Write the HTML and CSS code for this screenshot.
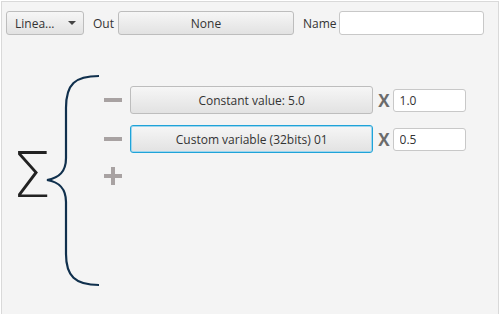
FILE: index.html
```html
<!DOCTYPE html>
<html lang="en">
<head>
    <meta charset="UTF-8">
    <title>Linear combination</title>
    <link rel="stylesheet" href="styles.css">
</head>
<body>
    <div class="panel">
        <div class="toolbar">
            <button class="btn combo">Linea...<span class="arrow"></span></button>
            <span class="label">Out</span>
            <button class="btn out-btn">None</button>
            <span class="label name-label">Name</span>
            <input type="text" class="field name-field">
        </div>

        <div class="sum">
            <span class="sigma">Σ</span>
            <svg class="brace" width="56" height="214" viewBox="0 0 56 214">
                <path d="M54 2 C30 2 21 10 21 34 L21 84 C21 98 14 104 2 106 C14 108 21 114 21 128 L21 180 C21 202 30 211 54 211"
                      fill="none" stroke="#10304d" stroke-width="2.2"/>
            </svg>
            <div class="terms">
                <div class="term">
                    <svg class="icon" width="18" height="18" viewBox="0 0 18 18"><rect x="0" y="7" width="18" height="4" fill="#a8a2a2"/></svg>
                    <button class="btn term-btn">Constant value: 5.0</button>
                    <span class="times">X</span>
                    <input type="text" class="field coef" value="1.0">
                </div>
                <div class="term">
                    <svg class="icon" width="18" height="18" viewBox="0 0 18 18"><rect x="0" y="7" width="18" height="4" fill="#a8a2a2"/></svg>
                    <button class="btn term-btn focused">Custom variable (32bits) 01</button>
                    <span class="times">X</span>
                    <input type="text" class="field coef" value="0.5">
                </div>
                <div class="term add-row">
                    <svg class="icon" width="18" height="18" viewBox="0 0 18 18"><rect x="0" y="7" width="18" height="4" fill="#a8a2a2"/><rect x="7" y="0" width="4" height="18" fill="#a8a2a2"/></svg>
                </div>
            </div>
        </div>
    </div>
</body>
</html>
```

FILE: styles.css
```css
body {
    margin: 0;
    background-color: #ffffff;
    font-family: "Open Sans", "Noto Sans", Arial, sans-serif;
    font-size: 12px;
    color: #333333;
}
.panel {
    margin: 1px 1px 0 1px;
    height: 313px;
    box-sizing: border-box;
    border: 1px solid #d9d9d9;
    border-bottom: none;
    background-color: #f4f4f4;
}
.toolbar {
    display: flex;
    align-items: center;
    padding: 9px 0 0 4px;
    height: 24px;
}
.btn {
    font-family: inherit;
    font-size: 12px;
    color: #333333;
    height: 24px;
    padding: 0;
    border: 1px solid #bdbdbd;
    border-radius: 3px;
    background: linear-gradient(#f6f6f6, #e2e2e2);
    box-sizing: border-box;
}
.combo {
    width: 78px;
    display: flex;
    align-items: center;
    justify-content: space-between;
    padding: 0 7px 0 8px;
}
.arrow {
    width: 0;
    height: 0;
    border-left: 4px solid transparent;
    border-right: 4px solid transparent;
    border-top: 4px solid #444444;
}
.label {
    width: 20px;
    margin-left: 9px;
    margin-right: 5px;
    font-size: 12px;
    white-space: nowrap;
}
.out-btn {
    width: 176px;
}
.name-label {
    width: 31px;
    margin-left: 9px;
    margin-right: 5px;
}
.field {
    font-family: inherit;
    font-size: 12px;
    color: #333333;
    height: 24px;
    box-sizing: border-box;
    border: 1px solid #c8c8c8;
    border-radius: 3px;
    background: #ffffff;
    padding: 0 6px;
}
.name-field {
    width: 145px;
}
.sum {
    display: flex;
    align-items: flex-start;
    margin-top: 39px;
}
.sigma {
    font-family: "DejaVu Sans", sans-serif;
    font-weight: 200;
    font-size: 62px;
    line-height: 62px;
    color: #222222;
    margin: 71px 0 0 10px;
}
.brace {
    margin-left: -6px;
}
.terms {
    display: flex;
    flex-direction: column;
    gap: 11px;
    margin-top: 12px;
    margin-left: 3px;
}
.term {
    display: flex;
    align-items: center;
    height: 28px;
}
.icon {
    margin-right: 8px;
}
.term-btn {
    width: 243px;
    height: 28px;
    font-size: 12px;
}
.term-btn.focused {
    border-color: #1fa3d8;
    box-shadow: inset 0 0 0 1px #9fd6ee;
}
.times {
    font-weight: bold;
    font-size: 17px;
    color: #6b6b6b;
    margin: 0 3px 0 5px;
}
.coef {
    width: 73px;
    height: 23px;
}
.add-row {
    margin-top: -2px;
}
```
